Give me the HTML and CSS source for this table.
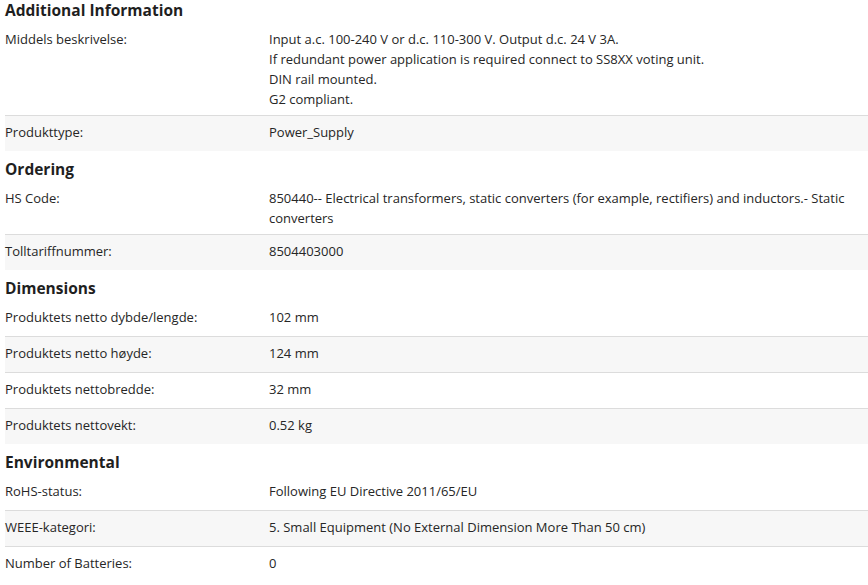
FILE: index.html
```html
<!DOCTYPE html>
<html lang="no">
<head>
<meta charset="utf-8">
<title>Additional Information</title>
<link rel="stylesheet" href="styles.css">
</head>
<body>
<div class="sheet">
  <section class="group">
    <h2 class="group-title">Additional Information</h2>
    <div class="row">
      <div class="label">Middels beskrivelse:</div>
      <div class="value">Input a.c. 100-240 V or d.c. 110-300 V. Output d.c. 24 V 3A.<br>If redundant power application is required connect to SS8XX voting unit.<br>DIN rail mounted.<br>G2 compliant.</div>
    </div>
    <div class="row">
      <div class="label">Produkttype:</div>
      <div class="value">Power_Supply</div>
    </div>
  </section>
  <section class="group">
    <h2 class="group-title">Ordering</h2>
    <div class="row">
      <div class="label">HS Code:</div>
      <div class="value">850440-- Electrical transformers, static converters (for example, rectifiers) and inductors.- Static converters</div>
    </div>
    <div class="row">
      <div class="label">Tolltariffnummer:</div>
      <div class="value">8504403000</div>
    </div>
  </section>
  <section class="group">
    <h2 class="group-title">Dimensions</h2>
    <div class="row">
      <div class="label">Produktets netto dybde/lengde:</div>
      <div class="value">102 mm</div>
    </div>
    <div class="row">
      <div class="label">Produktets netto høyde:</div>
      <div class="value">124 mm</div>
    </div>
    <div class="row">
      <div class="label">Produktets nettobredde:</div>
      <div class="value">32 mm</div>
    </div>
    <div class="row">
      <div class="label">Produktets nettovekt:</div>
      <div class="value">0.52 kg</div>
    </div>
  </section>
  <section class="group">
    <h2 class="group-title">Environmental</h2>
    <div class="row">
      <div class="label">RoHS-status:</div>
      <div class="value">Following EU Directive 2011/65/EU</div>
    </div>
    <div class="row">
      <div class="label">WEEE-kategori:</div>
      <div class="value">5. Small Equipment (No External Dimension More Than 50 cm)</div>
    </div>
    <div class="row">
      <div class="label">Number of Batteries:</div>
      <div class="value">0</div>
    </div>
  </section>
</div>
</body>
</html>
```
FILE: styles.css
```css
html, body {
  margin: 0;
  padding: 0;
  background: #ffffff;
}
body {
  font-family: "Open Sans", Lato, sans-serif;
  font-size: 13px;
  color: #262626;
  overflow: hidden;
}
.sheet {
  margin: -8px 0 0 5px;
}
.group-title {
  margin: 0;
  padding: 8px 0 3px;
  font-size: 15.5px;
  line-height: 20px;
  font-weight: 700;
  color: #1f1f1f;
}
.row {
  display: grid;
  grid-template-columns: 264px 1fr;
  align-items: start;
  padding: 6px 0;
  min-height: 23px;
  line-height: 20px;
}
.row + .row {
  border-top: 1px solid #dcdcdc;
}
.row:nth-of-type(even) {
  background: #f7f7f7;
}
.label, .value {
  min-width: 0;
}
```
